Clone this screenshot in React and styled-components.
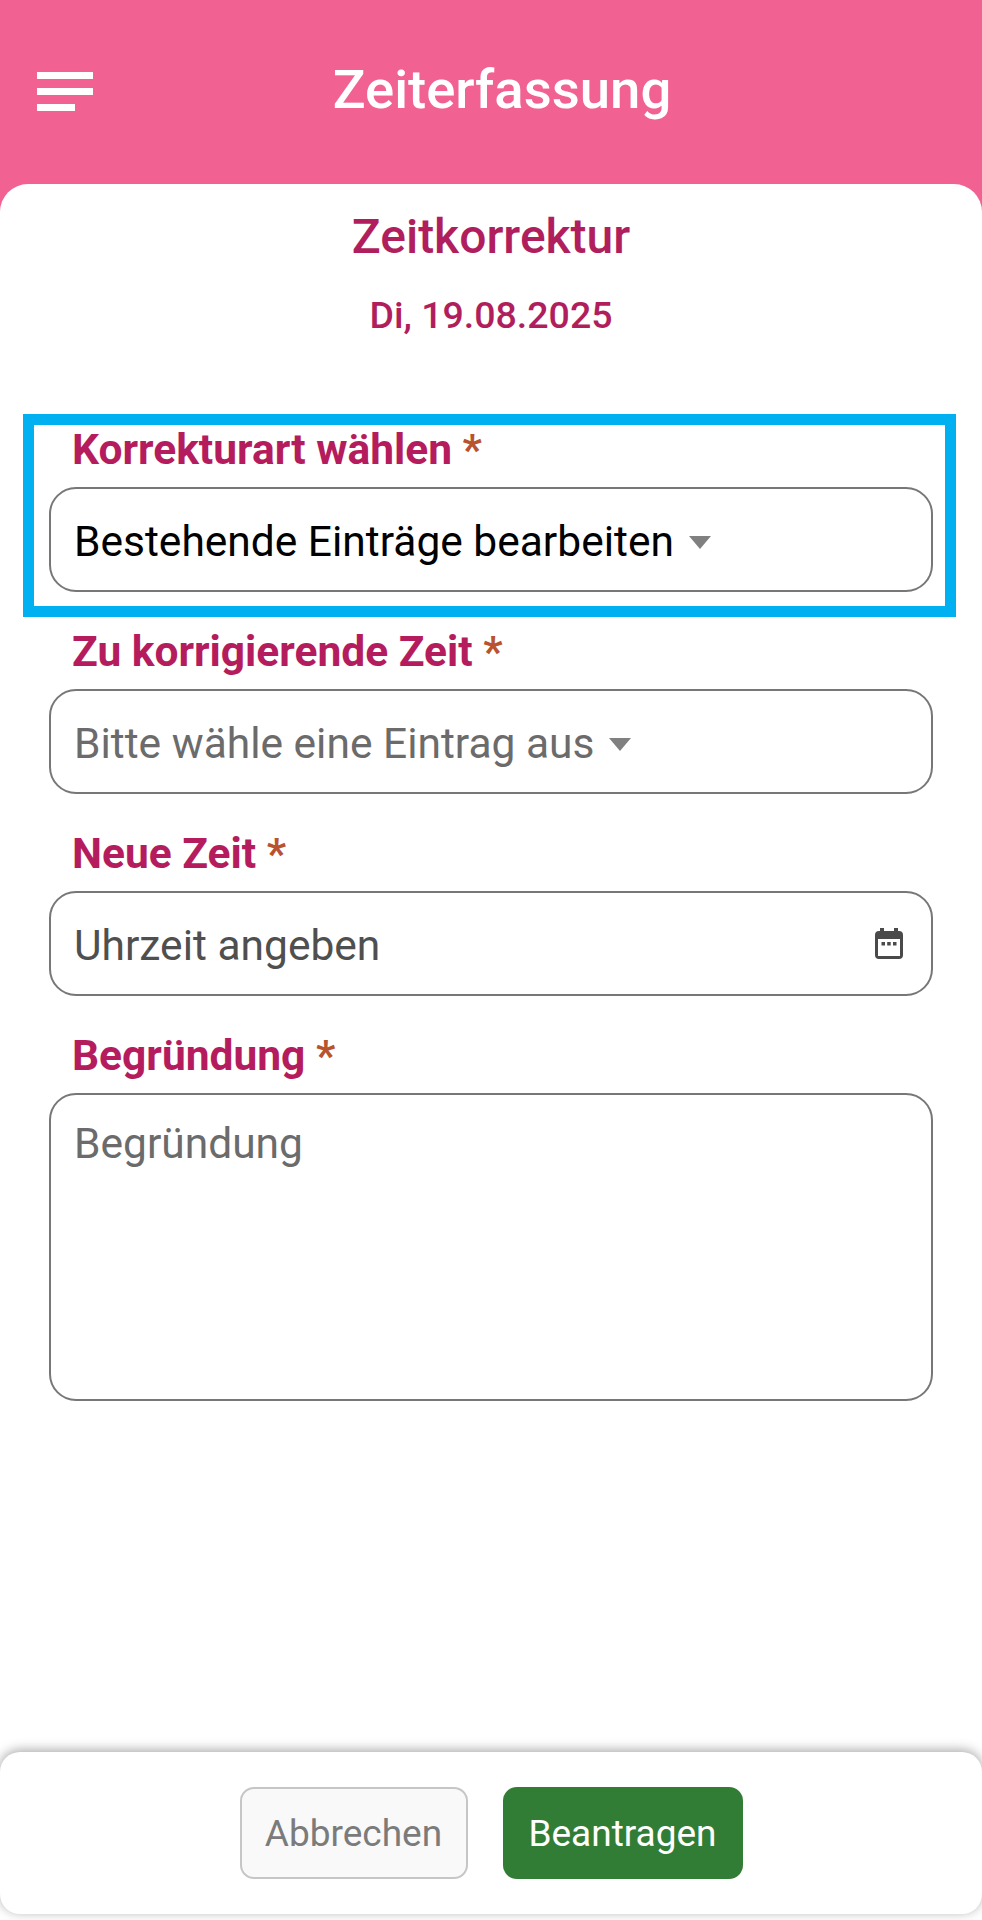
import React from "react";
import styled, { createGlobalStyle } from "styled-components";

const Global = createGlobalStyle`
  html, body { margin: 0; padding: 0; background: #fff; }
  * { box-sizing: border-box; }
`;

const Page = styled.div`
  width: 982px;
  height: 1920px;
  display: flex;
  flex-direction: column;
  background: #f16292;
  font-family: Roboto, "Noto Sans", sans-serif;
  overflow: hidden;
`;

const Header = styled.header`
  height: 184px;
  flex: none;
  display: grid;
  grid-template-columns: 37px 56px 1fr 71px;
  align-items: start;
`;

const MenuButton = styled.div`
  grid-column: 2;
  margin-top: 72px;
  display: flex;
  flex-direction: column;
  gap: 9px;
`;

const MenuBar = styled.span`
  display: block;
  height: 7px;
  width: ${(p) => p.$width}px;
  background: #fff;
`;

const AppTitle = styled.h1`
  grid-column: 3;
  margin: 57px 0 0;
  font-size: 54.5px;
  line-height: 64px;
  font-weight: 500;
  color: #fff;
  text-align: center;
`;

const Sheet = styled.main`
  flex: 1;
  display: flex;
  flex-direction: column;
  background: #fff;
  border-radius: 28px 28px 0 0;
`;

const SheetTitle = styled.h2`
  margin: 26px 0 0;
  font-size: 48px;
  line-height: 54px;
  font-weight: 500;
  color: #b01e5d;
  text-align: center;
`;

const DateLine = styled.div`
  margin-top: 30px;
  font-size: 37.5px;
  line-height: 42px;
  font-weight: 500;
  color: #b01e5d;
  text-align: center;
`;

const Form = styled.div`
  margin-top: 78px;
  padding: 0 26px 0 23px;
  display: flex;
  flex-direction: column;
  flex: 1;
`;

const Field = styled.div`
  padding: ${(p) => (p.$marked ? "0 12px 14px 15px" : "0 23px 0 26px")};
  margin-top: ${(p) => p.$gap || 0}px;
  border: ${(p) => (p.$marked ? "11px solid #00b0f0" : "none")};
`;

const Label = styled.label`
  display: block;
  padding-left: 23px;
  font-size: 42.5px;
  line-height: 50px;
  font-weight: 700;
  color: #b51c5d;
  margin-bottom: 12px;
`;

const Required = styled.span`
  color: #b9532f;
`;

const Control = styled.div`
  height: 105px;
  display: flex;
  align-items: center;
  padding: 0 28px 0 23px;
  gap: 15px;
  border: 2px solid #777;
  border-radius: 27px;
  background: #fff;
  font-size: 42.5px;
  color: ${(p) => p.$color};
`;

const ControlText = styled.span`
  flex: ${(p) => (p.$grow ? 1 : "none")};
  padding-top: 4px;
`;

const Caret = styled.span`
  width: 0;
  height: 0;
  border-left: 11px solid transparent;
  border-right: 11px solid transparent;
  border-top: 13px solid #808080;
  margin-top: 5px;
`;

const TextArea = styled.div`
  height: 308px;
  padding: 24px 23px;
  border: 2px solid #777;
  border-radius: 27px;
  font-size: 42.5px;
  line-height: 50px;
  color: #6b6b6b;
`;

const Footer = styled.footer`
  flex: none;
  height: 162px;
  margin-bottom: 6px;
  display: flex;
  justify-content: center;
  align-items: center;
  gap: 35px;
  background: #fff;
  border-radius: 20px;
  box-shadow: 0 -2px 12px rgba(0, 0, 0, 0.35);
`;

const Cancel = styled.button`
  width: 228px;
  height: 92px;
  border: 2px solid #c6c6c6;
  border-radius: 14px;
  background: #f9f9f9;
  color: #7b7b7b;
  font: 400 37px Roboto, sans-serif;
`;

const Submit = styled.button`
  width: 240px;
  height: 92px;
  border: none;
  border-radius: 14px;
  background: #317d35;
  color: #fff;
  font: 400 37px Roboto, sans-serif;
`;

const CalendarIcon = () => (
  <svg width="28" height="31" viewBox="0 0 28 31" aria-hidden="true">
    <path
      fill="#4a4a4a"
      fillRule="evenodd"
      d="M5 0h4v3h10V0h4v3h1a4 4 0 0 1 4 4v20a4 4 0 0 1-4 4H4a4 4 0 0 1-4-4V7a4 4 0 0 1 4-4h1zM3 11v17h22V11z"
    />
    <rect x="6.5" y="14" width="3.5" height="3.5" fill="#4a4a4a" />
    <rect x="12.2" y="14" width="3.5" height="3.5" fill="#4a4a4a" />
    <rect x="18" y="14" width="3.5" height="3.5" fill="#4a4a4a" />
  </svg>
);

const fieldLabel = (text) => (
  <Label>
    {text} <Required>*</Required>
  </Label>
);

export default function App() {
  return (
    <Page>
      <Global />
      <Header>
        <MenuButton>
          <MenuBar $width={56} />
          <MenuBar $width={56} />
          <MenuBar $width={38} />
        </MenuButton>
        <AppTitle>Zeiterfassung</AppTitle>
      </Header>
      <Sheet>
        <SheetTitle>Zeitkorrektur</SheetTitle>
        <DateLine>Di, 19.08.2025</DateLine>
        <Form>
          <Field $marked>
            {fieldLabel("Korrekturart wählen")}
            <Control $color="#000">
              <ControlText>Bestehende Einträge bearbeiten</ControlText>
              <Caret />
            </Control>
          </Field>
          <Field $gap={10}>
            {fieldLabel("Zu korrigierende Zeit")}
            <Control $color="#6b6b6b">
              <ControlText>Bitte wähle eine Eintrag aus</ControlText>
              <Caret />
            </Control>
          </Field>
          <Field $gap={35}>
            {fieldLabel("Neue Zeit")}
            <Control $color="#4f4f4f">
              <ControlText $grow>Uhrzeit angeben</ControlText>
              <CalendarIcon />
            </Control>
          </Field>
          <Field $gap={35}>
            {fieldLabel("Begründung")}
            <TextArea>Begründung</TextArea>
          </Field>
        </Form>
        <Footer>
          <Cancel>Abbrechen</Cancel>
          <Submit>Beantragen</Submit>
        </Footer>
      </Sheet>
    </Page>
  );
}
